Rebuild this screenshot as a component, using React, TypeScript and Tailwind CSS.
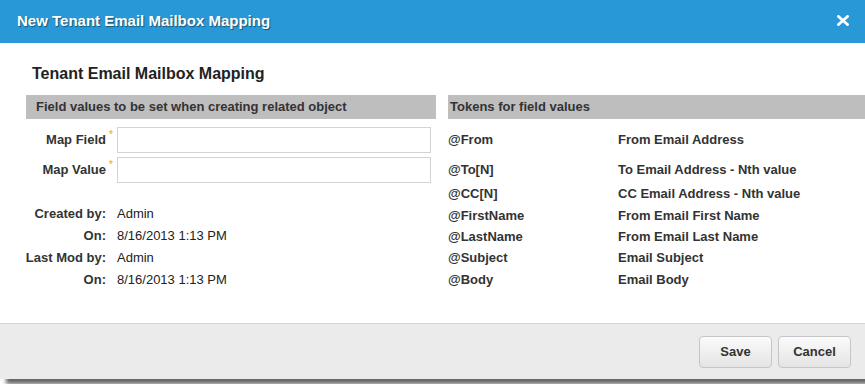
import React from "react";

const TOKENS = [
  { token: "@From", desc: "From Email Address", h: "h-[26px]" },
  { token: "@To[N]", desc: "To Email Address - Nth value", h: "h-[30px] pt-[4px]" },
  { token: "@CC[N]", desc: "CC Email Address - Nth value", h: "h-[22px]" },
  { token: "@FirstName", desc: "From Email First Name", h: "h-[21px]" },
  { token: "@LastName", desc: "From Email Last Name", h: "h-[21px]" },
  { token: "@Subject", desc: "Email Subject", h: "h-[22px]" },
  { token: "@Body", desc: "Email Body", h: "h-[22px]" },
];

const AUDIT = [
  { label: "Created by:", value: "Admin" },
  { label: "On:", value: "8/16/2013 1:13 PM" },
  { label: "Last Mod by:", value: "Admin" },
  { label: "On:", value: "8/16/2013 1:13 PM" },
];

function RequiredField({ label }: { label: string }) {
  return (
    <div className="flex h-[26px] items-center">
      <div className="flex w-[91px] items-center justify-end pr-[3px] text-[13px] font-bold whitespace-nowrap text-[#333]">
        <span className="relative">
          {label}
          <span className="absolute -right-[7px] -top-[4px] text-[11px] font-normal text-[#f3a42b]">*</span>
        </span>
        <span className="w-[8px]" />
      </div>
      <input type="text" className="h-[26px] w-[314px] border border-[#d3d3d3] bg-white outline-none" />
    </div>
  );
}

export default function App() {
  return (
    <div className="h-[384px] w-[865px] overflow-hidden bg-white font-['Liberation_Sans',Arial,sans-serif]">
      <div className="flex h-[379px] w-[865px] flex-col bg-white shadow-[6px_5px_4px_rgba(0,0,0,0.6)]">
        {/* Title bar */}
        <div className="flex h-[43px] shrink-0 items-center justify-between bg-[#2898d6] pl-[17px] pr-[16px]">
          <span className="text-[15px] font-bold text-white [text-shadow:1px_1px_1px_rgba(0,0,0,0.45)]">
            New Tenant Email Mailbox Mapping
          </span>
          <svg width="12" height="11" viewBox="0 0 12 11" className="mt-[-2px]">
            <path d="M1.5 1.5 L10.5 9.5 M10.5 1.5 L1.5 9.5" stroke="white" strokeWidth="2.8" strokeLinecap="square" />
          </svg>
        </div>

        {/* Body */}
        <div className="flex-1 pl-[26px] pt-[21px]">
          <div className="pl-[6px] text-[16px] font-bold leading-[20px] text-[#222]">Tenant Email Mailbox Mapping</div>

          <div className="mt-[11px] flex gap-[12px]">
            {/* Left column */}
            <div className="w-[410px]">
              <div className="flex h-[24px] items-center bg-[#bebebe] pl-[10px] text-[13px] font-bold text-[#333]">
                Field values to be set when creating related object
              </div>
              <div className="mt-[8px] flex flex-col gap-[4px]">
                <RequiredField label="Map Field" />
                <RequiredField label="Map Value" />
              </div>
              <div className="mt-[20px] flex flex-col">
                {AUDIT.map((row, i) => (
                  <div key={i} className="flex h-[22px] items-center text-[13px] text-[#222]">
                    <span className="flex w-[91px] shrink-0 justify-end pr-[11px] font-bold whitespace-nowrap text-[#333]">
                      <span className="shrink-0">{row.label}</span>
                    </span>
                    <span>{row.value}</span>
                  </div>
                ))}
              </div>
            </div>

            {/* Right column */}
            <div className="flex-1">
              <div className="flex h-[24px] items-center bg-[#bebebe] pl-[2px] text-[13px] font-bold text-[#333]">
                Tokens for field values
              </div>
              <div className="mt-[8px] flex flex-col text-[13px] font-bold text-[#333]">
                {TOKENS.map((t) => (
                  <div key={t.token} className={`flex items-center ${t.h}`}>
                    <span className="w-[170px]">{t.token}</span>
                    <span>{t.desc}</span>
                  </div>
                ))}
              </div>
            </div>
          </div>
        </div>

        {/* Footer */}
        <div className="flex h-[56px] shrink-0 items-center justify-end gap-[6px] border-t border-[#d6d6d6] bg-[#ebebeb] pr-[14px]">
          <button className="h-[32px] w-[73px] rounded-[4px] border border-[#c6c6c6] bg-gradient-to-b from-[#fbfbfb] to-[#e4e4e4] text-[13px] font-bold text-[#333]">
            Save
          </button>
          <button className="h-[32px] w-[73px] rounded-[4px] border border-[#c6c6c6] bg-gradient-to-b from-[#fbfbfb] to-[#e4e4e4] text-[13px] font-bold text-[#333]">
            Cancel
          </button>
        </div>
      </div>
    </div>
  );
}
